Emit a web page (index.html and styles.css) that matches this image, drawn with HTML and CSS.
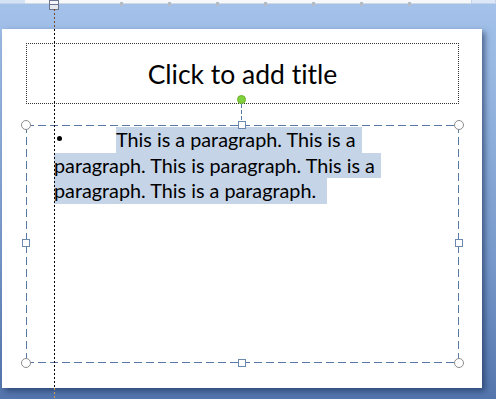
FILE: index.html
```html
<!DOCTYPE html>
<html lang="en">

<head>
    <meta charset="UTF-8">
    <title>slide editor</title>
    <link rel="stylesheet" href="styles.css">
</head>

<body>
    <div class="ruler">
        <div class="ruler-left"></div>
        <div class="ruler-track">
            <span class="tick"></span>
            <span class="tick"></span>
            <span class="tick"></span>
            <span class="tick"></span>
            <span class="tick"></span>
            <span class="tick"></span>
            <span class="tick"></span>
        </div>
        <div class="ruler-right"></div>
        <div class="indent-marker"></div>
    </div>

    <div class="workspace">
        <div class="slide">
            <div class="title-box">Click to add title</div>

            <div class="body-box">
                <div class="line first">
                    <span class="bullet"></span>
                    <span class="hl">This is a paragraph. This is a </span>
                </div>
                <div class="line"><span class="hl">paragraph. This is paragraph. This is a </span></div>
                <div class="line"><span class="hl last">paragraph. This is a paragraph.</span></div>

                <!-- selection handles -->
                <span class="rotate-stem"></span>
                <span class="rotate"></span>
                <span class="corner tl"></span>
                <span class="corner tr"></span>
                <span class="corner bl"></span>
                <span class="corner br"></span>
                <span class="side top"></span>
                <span class="side bottom"></span>
                <span class="side left"></span>
                <span class="side right"></span>
            </div>
        </div>
    </div>

    <div class="guide">
        <span class="seg above"></span>
        <span class="seg on-slide"></span>
        <span class="seg below"></span>
    </div>
</body>

</html>
```
FILE: styles.css
```css
html,
body {
    margin: 0;
    height: 100%;
}

body {
    width: 496px;
    height: 399px;
    overflow: hidden;
    position: relative;
    background: linear-gradient(#a4c2ea, #95b5e0 25%, #7799cb 65%, #5476ad);
    font-family: Lato, "Open Sans", sans-serif;
    font-variant-ligatures: none;
}

/* ruler */
.ruler {
    display: flex;
    height: 4px;
    position: relative;
}

.ruler-left {
    width: 30px;
    background-color: #d3e2f5;
    border-bottom: 1px solid #c0d2ea;
}

.ruler-track {
    width: 422px;
    background-color: #f7f8fa;
    border-bottom: 1px solid #d0d8e4;
    display: flex;
    padding-left: 95px;
    gap: 45px;
}

.tick {
    width: 3px;
    height: 4px;
    margin-top: 2px;
    background-color: #b6bcc6;
}

.ruler-right {
    width: 28px;
    background-color: #dce8f7;
    border: 1px solid #c2d4ec;
    border-top: none;
}

.indent-marker {
    position: absolute;
    left: 49px;
    top: 0;
    width: 8px;
    height: 8px;
    border: 1px solid #6c7590;
    background: linear-gradient(#f4f5f8 0 3px, #6c7590 3px 4px, #e6e8ee 4px);
}

/* slide */
.workspace {
    padding: 25px 0 0 2px;
}

.slide {
    width: 480px;
    height: 359px;
    background-color: #fff;
    box-shadow: 3px 3px 6px rgba(20, 40, 80, 0.6);
    padding-top: 14px;
    box-sizing: border-box;
}

.title-box {
    margin-left: 24px;
    width: 433px;
    height: 61px;
    box-sizing: border-box;
    border: 1px dotted #333;
    display: flex;
    align-items: center;
    justify-content: center;
    font-size: 26.5px;
    color: #000;
    padding-top: 1px;
}

.body-box {
    position: relative;
    margin: 21px 0 0 24px;
    width: 433px;
    height: 238px;
    box-sizing: border-box;
    border: 1px solid transparent;
    background:
        repeating-linear-gradient(90deg, #587aa3 0 8px, transparent 8px 12px) top left / 100% 1px no-repeat border-box,
        repeating-linear-gradient(90deg, #587aa3 0 8px, transparent 8px 12px) bottom left / 100% 1px no-repeat border-box,
        repeating-linear-gradient(#587aa3 0 8px, transparent 8px 12px) top left / 1px 100% no-repeat border-box,
        repeating-linear-gradient(#587aa3 0 8px, transparent 8px 12px) top right / 1px 100% no-repeat border-box;
    padding-top: 1px;
    font-size: 19.8px;
    color: #000;
}

.line {
    height: 25.5px;
    line-height: 25.5px;
    padding-left: 27px;
    white-space: pre;
}

.line.first {
    display: flex;
    align-items: center;
}

.hl {
    display: inline-block;
    background-color: #c6d4e7;
    padding-right: 1px;
}

.hl.last {
    padding-right: 11px;
}

.line.first .hl {
    margin-left: 54px;
}

.bullet {
    width: 5px;
    height: 5px;
    border-radius: 50%;
    background-color: #000;
    margin: 0 0 2px 3px;
}

/* selection handles */
.corner {
    position: absolute;
    width: 8px;
    height: 8px;
    border: 1px solid #8c8c8c;
    border-radius: 50%;
    background-color: #fff;
}

.corner.tl { left: -6px; top: -6px; }
.corner.tr { right: -6px; top: -6px; }
.corner.bl { left: -6px; bottom: -6px; }
.corner.br { right: -6px; bottom: -6px; }

.side {
    position: absolute;
    width: 6px;
    height: 6px;
    border: 1px solid #6a89ad;
    background-color: #fff;
}

.side.top { left: 211px; top: -5px; }
.side.bottom { left: 211px; bottom: -5px; }
.side.left { left: -5px; top: 113px; }
.side.right { right: -5px; top: 113px; }

.rotate-stem {
    position: absolute;
    left: 214px;
    top: -22px;
    height: 17px;
    width: 1px;
    background: repeating-linear-gradient(#587aa3 0 4px, transparent 4px 6px);
}

.rotate {
    position: absolute;
    left: 210px;
    top: -31px;
    width: 7px;
    height: 7px;
    border-radius: 50%;
    background-color: #80d23c;
    border: 1px solid #6cb02e;
}

/* vertical guide */
.guide {
    position: absolute;
    left: 54px;
    top: 9px;
    bottom: 0;
    width: 1px;
    display: flex;
    flex-direction: column;
}

.seg {
    display: block;
}

.seg.above {
    height: 20px;
    background: repeating-linear-gradient(#7a4a22 0 2px, transparent 2px 4px);
}

.seg.on-slide {
    height: 359px;
    background: repeating-linear-gradient(#000 0 2px, transparent 2px 4px);
}

.seg.below {
    flex: 1;
    background: repeating-linear-gradient(#d49a50 0 2px, transparent 2px 4px);
}
```
